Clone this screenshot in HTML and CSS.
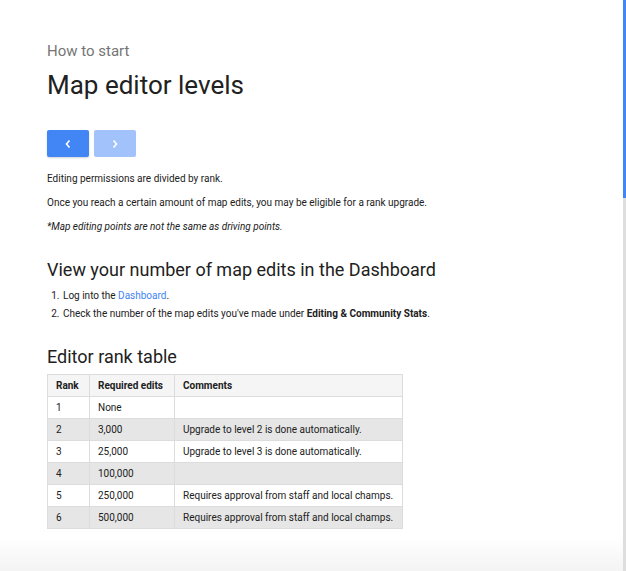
FILE: index.html
```html
<!DOCTYPE html>
<html>
<head>
<meta charset="utf-8">
<link rel="stylesheet" href="styles.css">
</head>
<body>
<main class="page">
  <div class="eyebrow">How to start</div>
  <h1 class="title">Map editor levels</h1>
  <div class="nav">
    <button class="btn btn-prev" aria-label="Previous">
      <svg width="8" height="10" viewBox="0 0 8 10"><path d="M5.5 1.5 L2.5 5 L5.5 8.5" fill="none" stroke="#fff" stroke-width="1.6"/></svg>
    </button>
    <button class="btn btn-next" aria-label="Next">
      <svg width="8" height="10" viewBox="0 0 8 10"><path d="M2.5 1.5 L5.5 5 L2.5 8.5" fill="none" stroke="#fff" stroke-width="1.6"/></svg>
    </button>
  </div>
  <p class="text">Editing permissions are divided by rank.</p>
  <p class="text">Once you reach a certain amount of map edits, you may be eligible for a rank upgrade.</p>
  <p class="text"><em>*Map editing points are not the same as driving points.</em></p>
  <h2 class="heading">View your number of map edits in the Dashboard</h2>
  <ol class="steps">
    <li>Log into the <a href="#" class="link">Dashboard</a>.</li>
    <li>Check the number of the map edits you've made under <strong>Editing &amp; Community Stats</strong>.</li>
  </ol>
  <h2 class="heading heading-table">Editor rank table</h2>
  <table class="ranks">
    <thead>
      <tr><th class="c1">Rank</th><th class="c2">Required edits</th><th class="c3">Comments</th></tr>
    </thead>
    <tbody>
      <tr><td>1</td><td>None</td><td></td></tr>
      <tr><td>2</td><td>3,000</td><td>Upgrade to level 2 is done automatically.</td></tr>
      <tr><td>3</td><td>25,000</td><td>Upgrade to level 3 is done automatically.</td></tr>
      <tr><td>4</td><td>100,000</td><td></td></tr>
      <tr><td>5</td><td>250,000</td><td>Requires approval from staff and local champs.</td></tr>
      <tr><td>6</td><td>500,000</td><td>Requires approval from staff and local champs.</td></tr>
    </tbody>
  </table>
</main>
<div class="fade"></div>
<div class="scrollbar"><div class="thumb"></div></div>
</body>
</html>
```
FILE: styles.css
```css
html, body {
  margin: 0;
  padding: 0;
  background: #fff;
  overflow: hidden;
}
body {
  font-family: Roboto, "Liberation Sans", Arial, sans-serif;
  color: #212121;
  width: 626px;
  height: 571px;
}
.page {
  padding: 42px 0 0 47px;
}
.eyebrow {
  font-size: 15px;
  color: #757575;
  line-height: 18px;
}
.title {
  margin: 10px 0 0;
  font-size: 26px;
  font-weight: 400;
  line-height: 30px;
  color: #212121;
}
.nav {
  display: flex;
  gap: 5px;
  margin-top: 30px;
}
.btn {
  width: 42px;
  height: 27px;
  border: 0;
  border-radius: 2px;
  padding: 0;
  display: flex;
  align-items: center;
  justify-content: center;
  box-shadow: 0 1px 2px rgba(0,0,0,0.18);
}
.btn-prev { background: #4285f4; }
.btn-next { background: #a1c2fa; box-shadow: none; }
.text {
  font-size: 10px;
  line-height: 14px;
  margin: 10px 0 0;
}
.text + .text { margin-top: 10px; }
.nav + .text { margin-top: 15px; }
.heading {
  font-size: 18px;
  font-weight: 400;
  line-height: 22px;
  margin: 25px 0 0;
}
.steps {
  margin: 6px 0 0;
  padding-left: 15px;
  font-size: 10px;
  line-height: 18px;
}
.steps li { padding-left: 1px; }
.link { color: #4285f4; text-decoration: none; }
.heading-table { margin-top: 23px; }
.ranks {
  margin-top: 6px;
  border-collapse: collapse;
  font-size: 10px;
  width: 356px;
}
.ranks th, .ranks td {
  border: 1px solid #dcdcdc;
  height: 21px;
  padding: 0 8px;
  text-align: left;
}
.ranks th { font-weight: 700; background: #f5f5f5; }
.ranks .c1 { width: 25px; }
.ranks .c2 { width: 68px; }
.ranks tbody tr:nth-child(even) td { background: #e6e6e6; }
.fade {
  position: fixed;
  left: 0;
  right: 0;
  bottom: 0;
  height: 34px;
  background: linear-gradient(to bottom, rgba(245,245,245,0), #f4f4f4);
}
.scrollbar {
  position: fixed;
  top: 0;
  right: 0;
  width: 3px;
  height: 571px;
  background: #dedede;
}
.thumb {
  height: 198px;
  background: #4285f4;
}
```
